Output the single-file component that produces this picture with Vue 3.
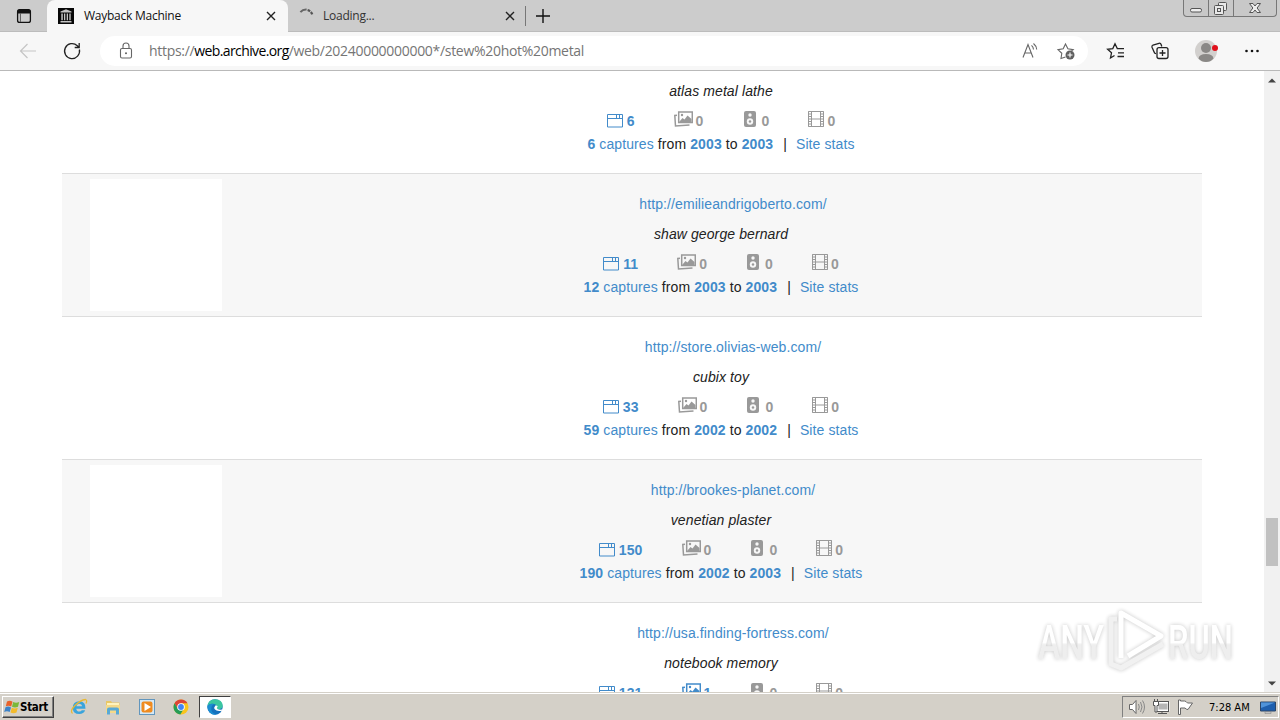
<template>
  <div class="desktop">
    <!-- Tab strip -->
    <header class="tab-strip">
      <div class="tab-actions">
        <svg class="icon-20" viewBox="0 0 20 20">
          <rect x="3.6" y="3.6" width="12.8" height="12.8" rx="2" fill="none" stroke="#111" stroke-width="1.3" />
          <path d="M3.5 5.5a2 2 0 0 1 2-2h9a2 2 0 0 1 2 2v2h-13z" fill="#111" />
          <path d="M6.4 7v9" stroke="#555" stroke-width="1" />
        </svg>
      </div>
      <div class="tab is-active">
        <svg class="favicon" viewBox="0 0 16 16">
          <rect width="16" height="16" fill="#080808" />
          <path d="M2.5 3.6 8 1.2l5.5 2.4v1h-11zM2.5 13h11v1.4h-11zM3.3 5.6h1.5v6.6H3.3zM6 5.6h1.3v6.6H6zM8.7 5.6H10v6.6H8.7zM11.3 5.6h1.4v6.6h-1.4z" fill="#c4c4c4" />
        </svg>
        <span class="tab-title">Wayback Machine</span>
        <svg class="tab-close" viewBox="0 0 10 10"><path d="M1 1l8 8M9 1L1 9" /></svg>
      </div>
      <div class="tab">
        <svg class="favicon" viewBox="0 0 16 16">
          <path d="M1.400 4.200A7.500 7.500 0 0 1 7.600 1.600" fill="none" stroke="#666" stroke-width="2" />
          <path d="M8.600 2A7 7 0 0 1 13.300 6.600" fill="none" stroke="#555" stroke-width="2.200" stroke-dasharray="2.800 1" />
        </svg>
        <span class="tab-title loading">Loading...</span>
        <svg class="tab-close" viewBox="0 0 10 10"><path d="M1 1l8 8M9 1L1 9" /></svg>
      </div>
      <svg class="tab-new" viewBox="0 0 14 14"><path d="M7 0v14M0 7h14" stroke="#111" stroke-width="1.4" /></svg>
      <div class="window-buttons">
        <span class="window-button">
          <svg width="24" height="16" viewBox="0 0 24 16"><rect x="6.5" y="8.5" width="11" height="3.5" rx="1.5" fill="#eee" stroke="#555" /></svg>
        </span>
        <span class="window-button">
          <svg width="24" height="16" viewBox="0 0 24 16" fill="#e8e8e8" stroke="#555">
            <rect x="9.500" y="2.500" width="8" height="8" rx="1" />
            <rect x="5.500" y="5.500" width="9" height="9" rx="1" />
            <rect x="8.500" y="8.500" width="3" height="3" />
          </svg>
        </span>
        <span class="window-button wide">
          <svg width="42" height="16" viewBox="0 0 42 16">
            <path d="M15.500 3.500h3.500l2 2.500 2-2.500h3.500l-3.400 4.500 3.400 4.500h-3.500l-2-2.500-2 2.500h-3.500l3.400-4.500z" fill="#eee" stroke="#555" />
          </svg>
        </span>
      </div>
    </header>

    <!-- Toolbar -->
    <nav class="toolbar">
      <svg class="icon-20 back" viewBox="0 0 20 20"><path d="M18 10H2.500M9.500 3 2.500 10l7 7" /></svg>
      <svg class="icon-20 reload" viewBox="0 0 20 20"><path d="M17.400 8.500A7.500 7.500 0 1 1 15.300 4.700L17 6.300M17.200 2v4.500h-4.500" /></svg>
      <div class="address-bar">
        <svg class="icon-20 lock" viewBox="0 0 20 20">
          <rect x="4.500" y="7.500" width="11" height="9.500" rx="1.500" />
          <path d="M7 7.500V5a3 3 0 0 1 6 0v2.500" />
          <circle cx="10" cy="12.300" r=".5" />
        </svg>
        <p class="url">https://<b>web.archive.org</b><span>/web/20240000000000*/stew%20hot%20metal</span></p>
        <svg class="icon-20 read" viewBox="0 0 20 20">
          <path d="M3 16.500 8 3.500l5 13M4.700 12h6.600M11.500 4.300q2 1.700 2 4.200M13.500 2.500q3 2.500 3.200 6" />
        </svg>
        <svg class="icon-20 star-add" viewBox="0 0 20 20">
          <path d="M9.500 16 5 17.500l.8-5.200L2 8.600l5.200-.8L9.500 3l2.400 4.800 5.300.8-2 1.700" />
          <circle cx="14" cy="14" r="4.500" class="badge" />
          <path d="M14 11.500v5M11.500 14h5" class="badge-plus" />
        </svg>
      </div>
      <svg class="icon-20 tool" viewBox="0 0 20 20">
        <path d="M8.500 14.500 4.500 17l1-5.200-3.900-3.500 5.200-.7L9 2.800l2.300 4.800H18M12 11.800h6M11.500 15.500H18" />
      </svg>
      <svg class="icon-20 tool" viewBox="0 0 20 20">
        <path d="M6 12.800 4.600 12 2 6.200q-.5-1.500 1-2.200L9 2.300q1.500-.4 2 1l.8 2.200" />
        <rect x="7" y="6.700" width="11" height="10.800" rx="2" />
        <path d="M12.500 9v6M9.500 12h6" />
      </svg>
      <svg class="avatar" viewBox="0 0 24 24">
        <circle cx="12" cy="12" r="11" fill="#d2d0ce" />
        <circle cx="12" cy="9" r="5" fill="#8a8886" />
        <path d="M4.500 19.500Q5 15 12 15t7.500 4.500Q16.500 23 12 23t-7.500-3.500z" fill="#8a8886" />
        <circle cx="21" cy="9" r="3" fill="#e0101c" />
      </svg>
      <svg class="icon-20 more" viewBox="0 0 20 20">
        <circle cx="4.500" cy="10" r="1.300" /><circle cx="10" cy="10" r="1.300" /><circle cx="15.500" cy="10" r="1.300" />
      </svg>
    </nav>

    <!-- Page -->
    <main class="page">
      <div class="results">
        <article v-for="(row, i) in results" :key="row.text" class="result" :class="{ shaded: i % 2 }">
          <div class="thumb"></div>
          <div class="result-body">
            <a class="result-url">{{ row.url }}</a>
            <p class="result-text">{{ row.text }}</p>
            <div class="counts">
              <span class="count pages on">
                <svg width="16" height="14" viewBox="0 0 16 14">
                  <path d="M.5.500h15v12.500H.5zM.5 4.500h15" /><path d="M9.500 1v3M12.500 1v3" />
                </svg>
                <b>{{ row.pages }}</b>
              </span>
              <span class="count images" :class="{ on: row.images > 0 }">
                <svg width="19" height="16" viewBox="0 0 19 16">
                  <path d="M4.700 1h13.600v10.500H4.700z" stroke-width="1.500" />
                  <path d="M3 4.300.8 4.500 1.500 15l14-1" stroke-width="1.500" />
                  <path d="M5.500 10.500 8.500 7l2 1.500 3-4L17.500 8v3h-12z" class="solid" />
                  <circle cx="8" cy="4" r="1.200" class="solid" />
                </svg>
                <b>{{ row.images }}</b>
              </span>
              <span class="count audio">
                <svg width="12" height="16" viewBox="0 0 12 16">
                  <rect width="12" height="16" rx="2" class="solid" />
                  <circle cx="6" cy="4" r="1.700" class="hole" />
                  <circle cx="6" cy="10.500" r="3.200" class="hole" />
                  <circle cx="6" cy="10.500" r="1.200" class="solid" />
                </svg>
                <b>0</b>
              </span>
              <span class="count video">
                <svg width="16" height="16" viewBox="0 0 16 16">
                  <path d="M.5.500h15v15H.5zM3.500 0v16M12.500 0v16M3.500 8h9" />
                  <path d="M2 0v16M14 0v16" stroke-width="3" stroke-dasharray="1 1.500" />
                </svg>
                <b>0</b>
              </span>
            </div>
            <p class="captures">
              <a><b>{{ row.captures }}</b> captures</a> from <a><b>{{ row.from }}</b></a> to
              <a><b>{{ row.to }}</b></a><span class="divider">|</span><a>Site stats</a>
            </p>
          </div>
        </article>
      </div>
      <div class="scrollbar">
        <svg width="8" height="5" viewBox="0 0 8 5"><path d="M0 4.500 4 .5l4 4z" /></svg>
        <div class="scroll-thumb"></div>
        <svg width="8" height="5" viewBox="0 0 8 5"><path d="M0 .500l4 4 4-4z" /></svg>
      </div>
    </main>

    <!-- Watermark over the page -->
    <svg class="watermark" viewBox="0 0 210 80" width="210" height="80">
      <defs>
        <linearGradient id="fade" x1="0" y1="0" x2="0" y2="1">
          <stop offset=".5" stop-color="#fff" />
          <stop offset=".54" stop-color="#ededed" />
        </linearGradient>
      </defs>
      <g class="watermark-text">
        <text x="8" y="59" textLength="66" lengthAdjust="spacingAndGlyphs">ANY</text>
        <text x="138" y="59" textLength="65" lengthAdjust="spacingAndGlyphs">RUN</text>
      </g>
      <g class="watermark-logo">
        <path d="M91 58V13l40 23-33 20" />
        <path d="M87 19h-6v45l10 4 42-24" class="edge" />
      </g>
    </svg>

    <!-- Taskbar -->
    <footer class="taskbar">
      <button class="start">
        <svg width="16" height="16" viewBox="0 0 16 16">
          <path d="M3 2.500q3-1.500 5.500.2L7.200 7.500Q4.500 6 1.800 7.300z" fill="#e8622a" />
          <path d="M9.200 3q2.800 1.400 6 0L14 7.800q-3 1.300-6 0z" fill="#7bb83a" />
          <path d="M1.500 8.200q2.700-1.400 5.500.2L5.700 13Q3 11.700.2 13z" fill="#3b82c8" />
          <path d="M7.800 8.700q2.900 1.400 6 0l-1.300 4.800q-3 1.300-6 0z" fill="#f3bb2c" />
        </svg>
        Start
      </button>
      <span class="task">
        <svg width="18" height="18" viewBox="0 0 18 18">
          <path d="M15.500 10.700H6.300q.2 2.800 3 2.800 1.700 0 2.500-1.300h3.300Q13.800 16 9.300 16 2.800 16 2.800 9.700T9.300 3.300Q15.900 3.400 15.500 10.700zM6.400 8.300H12.200Q11.900 5.800 9.300 5.800T6.400 8.300z" fill="#39a4dc" />
          <path d="M2.500 15.500Q-.5 13 5 7.500T15.500 1.500q2 .8.500 4" fill="none" stroke="#e8b833" stroke-width="1.300" />
        </svg>
      </span>
      <span class="task">
        <svg width="18" height="18" viewBox="0 0 18 18">
          <path d="M2 3h5l1 1.500h7.500V15H2z" fill="#e9c765" />
          <path d="M3 5h12v3H3z" fill="#fff3bd" /><path d="M2 7h14v8H2z" fill="#f4d989" />
          <path d="M3 16.500V11.500Q3 9.500 5 9.500h8q2 0 2 2v5h-3V12.500H6v4z" fill="#58a9d6" />
        </svg>
      </span>
      <span class="task">
        <svg width="18" height="18" viewBox="0 0 18 18">
          <rect x="1.500" y="1.500" width="15" height="15" fill="#d5e8f5" stroke="#6296bd" />
          <rect x="3.500" y="3.500" width="11" height="11" rx="2" fill="#ef8b20" />
          <path d="M6.500 5v8L13 9z" fill="#fff" />
        </svg>
      </span>
      <span class="task">
        <svg width="18" height="18" viewBox="0 0 18 18">
          <circle cx="9" cy="9" r="7.500" fill="#f9c51d" />
          <path d="M2.500 5.300A7.500 7.500 0 0 1 15.500 5.300H9L5.800 11z" fill="#dc4437" />
          <path d="M2.500 5.300A7.500 7.500 0 0 0 8.300 16.500L12 10.500 6 11z" fill="#249c57" />
          <circle cx="9" cy="9" r="3.800" fill="#fff" /><circle cx="9" cy="9" r="2.900" fill="#4285f4" />
        </svg>
      </span>
      <span class="task pressed">
        <svg width="18" height="18" viewBox="0 0 18 18">
          <circle cx="9" cy="9" r="7.700" fill="#1672bd" />
          <path d="M1.400 8Q2.500 1.300 9 1.300q7.500.5 7.700 6.200 0 3.800-4.500 3.800-2.500-.2-1.700-1.500Q11.500 7 8 6 4 5 1.400 8z" fill="#3bc6a0" />
          <path d="M1.400 8Q4 5 8 6q-3 1.500-2.700 5.500T11 16.500Q5 17.500 2.400 12.500 1.200 10 1.400 8z" fill="#1b8ed2" />
          <path d="M9.300 7.500Q7.500 9.500 9 11.500t7 1.200l1.500-1.500q-4 1-6-.2-1.500-1 .2-2.500-.5-1.500-2.400-1z" fill="#fff" />
        </svg>
      </span>
      <div class="tray">
        <svg width="18" height="18" viewBox="0 0 18 18">
          <path d="M1.500 6.500h3l3.500-4v13l-3.500-4h-3z" fill="#fff" stroke="#666" />
          <path d="M10.500 6q1.500 3 0 6M12.500 4q3 5 0 10M14.500 2.500q4 6.500 0 13" fill="none" stroke="#888" />
        </svg>
        <svg width="18" height="18" viewBox="0 0 18 18">
          <rect x="5.500" y="4.500" width="11" height="8" fill="#b5b5b5" stroke="#fff" stroke-width="2" />
          <rect x="4.500" y="3.500" width="12" height="10" fill="none" stroke="#555" />
          <path d="M10 13.500v2M6 15.500h9" stroke="#555" />
          <path d="M1.500 3.500h5v4h-1.500V14H3V7.500H1.500zM2.500 1v2M5.500 1v2" fill="#fff" stroke="#555" />
        </svg>
        <svg width="18" height="18" viewBox="0 0 18 18">
          <path d="M2.500 2v14.500h2V10h4.500q1 1.500 3 1.500L16.500 5h-5Q10 3 8.500 3h-4V2z" fill="#fff" stroke="#666" />
        </svg>
        <time class="clock">7:28 AM</time>
        <svg width="18" height="18" viewBox="0 0 18 18">
          <path d="M1.500 4h15v9h-15z" fill="#1e5fae" stroke="#2c4668" /><path d="M2 4.500h14L2 10z" fill="#4f93da" />
          <path d="M6 14h6v1.500H6z" fill="#ddd" stroke="#777" stroke-width=".5" />
        </svg>
      </div>
    </footer>
  </div>
</template>

<script setup>
// The first row is scrolled so far that its address is above the page edge
const results = [
  { url: "", text: "atlas metal lathe", pages: 6, images: 0, captures: 6, from: 2003, to: 2003 },
  { url: "http://emilieandrigoberto.com/", text: "shaw george bernard", pages: 11, images: 0, captures: 12, from: 2003, to: 2003 },
  { url: "http://store.olivias-web.com/", text: "cubix toy", pages: 33, images: 0, captures: 59, from: 2002, to: 2002 },
  { url: "http://brookes-planet.com/", text: "venetian plaster", pages: 150, images: 0, captures: 190, from: 2002, to: 2003 },
  { url: "http://usa.finding-fortress.com/", text: "notebook memory", pages: 131, images: 1, captures: 150, from: 2002, to: 2003 },
];
</script>

<style>
body {
  margin: 0;
  overflow: hidden;
}
</style>

<style scoped>
.desktop {
  position: relative;
  display: flex;
  flex-direction: column;
  width: 1280px;
  height: 720px;
  overflow: hidden;
  background: #fff;
  font-family: "Liberation Sans", Arial, sans-serif;
}
p {
  margin: 0;
}
svg {
  display: block;
  flex-shrink: 0;
}
.icon-20 {
  width: 20px;
  height: 20px;
  fill: none;
}

/* ─── Tab strip ─── */
.tab-strip {
  display: flex;
  height: 32px;
  flex-shrink: 0;
  background: linear-gradient(#ccc 31px, #bcbcbc 31px);
  font-family: "Open Sans", "Noto Sans", sans-serif;
}
.tab-actions {
  display: flex;
  align-items: center;
  width: 47px;
  padding-left: 14px;
  box-sizing: border-box;
}
.tab {
  display: flex;
  align-items: center;
  width: 238px;
  height: 20px;
  margin-top: 6px;
  padding: 0 10px 0 11px;
  box-sizing: border-box;
  border-right: 1px solid #777;
}
.tab.is-active {
  width: 241px;
  height: 32px;
  margin-top: 0;
  padding-right: 12px;
  border: 0;
  border-radius: 8px 8px 0 0;
  background: #f7f7f7;
}
.favicon {
  width: 16px;
  height: 16px;
}
.tab-title {
  flex: 1;
  margin-left: 10px;
  font-size: 12px;
  line-height: 16px;
  letter-spacing: -0.25px;
  color: #111;
}
.tab-title.loading {
  margin-left: 8px;
  color: #333;
}
.tab-close {
  width: 10px;
  height: 10px;
  stroke: #222;
  stroke-width: 1.4;
}
.tab-new {
  width: 14px;
  height: 14px;
  margin: 9px 0 0 10px;
}
.window-buttons {
  display: flex;
  height: 16px;
  margin-left: auto;
  margin-right: 3px;
  border: 1px solid #777;
  border-top: 0;
  border-radius: 0 0 4px 4px;
  background: #c8c8c8;
}
.window-button {
  width: 24px;
  border-right: 1px solid #777;
}
.window-button.wide {
  width: 42px;
  border: 0;
}

/* ─── Toolbar ─── */
.toolbar {
  display: flex;
  align-items: center;
  height: 39px;
  flex-shrink: 0;
  box-sizing: border-box;
  padding-left: 18px;
  background: #f7f7f7;
  border-bottom: 1px solid #b9b9b9;
}
.back {
  stroke: #c5c5c5;
  stroke-width: 1.2;
}
.reload {
  margin-left: 24px;
  stroke: #222;
  stroke-width: 1.3;
}
.address-bar {
  display: flex;
  align-items: center;
  width: 988px;
  height: 30px;
  margin-left: 18px;
  padding: 0 12px 0 16px;
  box-sizing: border-box;
  border-radius: 15px;
  background: #fff;
}
.lock,
.read,
.star-add {
  stroke: #666;
  stroke-width: 1.1;
}
.star-add {
  margin-left: 16px;
}
.badge {
  fill: #606060;
  stroke: none;
}
.badge-plus {
  stroke: #fff;
}
.url {
  flex: 1;
  margin-left: 13px;
  font-family: "Open Sans", "Noto Sans", sans-serif;
  font-size: 14px;
  line-height: 20px;
  letter-spacing: -0.3px;
  color: #757575;
}
.url b {
  font-weight: 400;
  letter-spacing: -0.62px;
  color: #000;
}
.tool {
  margin-left: 18px;
  stroke: #222;
  stroke-width: 1.3;
}
.tool + .tool {
  margin-left: 24px;
}
.avatar {
  width: 24px;
  height: 24px;
  margin-left: 24px;
}
.more {
  margin-left: 24px;
  fill: #111;
}

/* ─── Results ─── */
.page {
  display: flex;
  height: 621px;
  flex-shrink: 0;
  overflow: hidden;
}
.results {
  width: 1140px;
  margin: -40px 62px 0;
}
.result {
  display: flex;
  height: 143px;
  box-sizing: border-box;
  padding: 5px 0 0 28px;
  border-bottom: 1px solid #ddd;
}
.result.shaded {
  background: #f7f7f7;
}
.thumb {
  width: 132px;
  height: 132px;
  background: #fff;
}
.result-body {
  flex: 1;
  margin-left: 18px;
  padding-top: 15px;
  text-align: center;
  font-size: 14px;
  line-height: 20px;
  letter-spacing: 0.1px;
  color: #222;
}
.result-url {
  display: block;
  min-height: 20px;
  padding-left: 24px;
}
.result-text {
  margin-top: 10px;
  font-style: italic;
}
a {
  color: #428bca;
}
.counts {
  display: flex;
  justify-content: center;
  align-items: flex-start;
  gap: 39px;
  height: 20px;
  margin-top: 9px;
  color: #999;
  font-size: 14px;
}
.count {
  display: flex;
  gap: 3px;
}
.count b {
  margin-top: 1px;
}
.count.on {
  color: #428bca;
}
.count svg {
  margin-top: 1px;
  fill: none;
  stroke: currentColor;
}
.pages {
  gap: 4px;
}
.count.pages svg {
  margin-top: 4px;
}
.images {
  margin-right: 1px;
}
.audio {
  gap: 6px;
}
.count .solid {
  fill: currentColor;
  stroke: none;
}
.count .hole {
  fill: #f7f7f7;
  stroke: none;
}
.captures {
  margin-top: 4px;
}
.divider {
  margin: 0 9px 0 10px;
}

/* ─── Scrollbar ─── */
.scrollbar {
  display: flex;
  flex-direction: column;
  align-items: center;
  width: 16px;
  box-sizing: border-box;
  padding: 7px 0 6px;
  background: #f1f1f1;
  fill: #444;
}
.scroll-thumb {
  width: 12px;
  height: 48px;
  margin: 435px 0 auto;
  background: #c1c1c1;
}

/* ─── Watermark ─── */
.watermark {
  position: absolute;
  left: 1030px;
  top: 600px;
  opacity: 0.9;
  filter: drop-shadow(0 0 2px rgba(0, 0, 0, 0.25));
}
.watermark-text {
  font-family: Roboto, sans-serif;
  font-size: 49px;
  font-weight: 500;
  fill: url(#fade);
}
.watermark-logo {
  fill: none;
  stroke: #fff;
  stroke-width: 5;
  stroke-linejoin: round;
}
.watermark-logo .edge {
  stroke: #f0f0f0;
}

/* ─── Taskbar ─── */
.taskbar {
  display: flex;
  align-items: center;
  height: 28px;
  box-sizing: border-box;
  padding: 2px 1px 0 2px;
  background: linear-gradient(#d4d0c8 1px, #fff 1px 2px, #d4d0c8 2px);
  font-family: "DejaVu Sans Condensed", Tahoma, sans-serif;
}
.start {
  display: flex;
  align-items: center;
  width: 52px;
  height: 22px;
  margin-right: 8px;
  padding: 0 0 0 1px;
  box-sizing: border-box;
  border: 1px solid;
  border-color: #fff #404040 #404040 #fff;
  box-shadow: inset -1px -1px #808080;
  background: #d4d0c8;
  color: #000;
  font: bold 11.5px "DejaVu Sans Condensed", Tahoma, sans-serif;
  letter-spacing: -0.3px;
}
.task {
  display: flex;
  align-items: center;
  justify-content: center;
  width: 34px;
  height: 22px;
}
.task.pressed {
  width: 32px;
  margin-left: 1px;
  box-sizing: border-box;
  border: 1px solid;
  border-color: #404040 #fff #fff #404040;
  background: #fff;
}
.tray {
  display: flex;
  align-items: center;
  width: 157px;
  height: 22px;
  margin-left: auto;
  padding: 0 1px 0 5px;
  box-sizing: border-box;
  border: 1px solid;
  border-color: #808080 #fff #fff #808080;
}
.tray svg + svg {
  margin-left: 6px;
}
.clock {
  flex: 1;
  margin-left: 15px;
  font-size: 11px;
  letter-spacing: 0;
  white-space: nowrap;
  color: #000;
}
</style>
